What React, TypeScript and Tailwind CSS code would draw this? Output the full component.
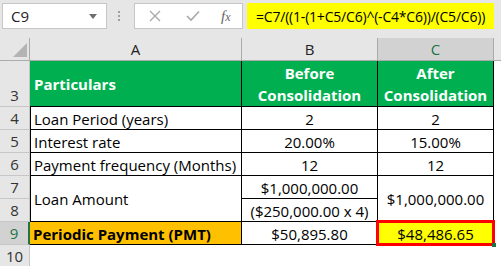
import type { ReactNode } from 'react'

const font = { fontFamily: '"Open Sans", Lato, "Liberation Sans", sans-serif' }

function RowNum({ n, selected }: { n: number; selected?: boolean }) {
  return (
    <div
      className={`flex items-end justify-center border-b border-r pb-[1px] text-[15px] leading-[20px] ${
        selected
          ? 'border-r-[2px] border-b-[#c6c6c6] border-r-[#217346] bg-[#d2d2d2] text-[#217346]'
          : 'border-[#c6c6c6] bg-[#e6e6e6] text-[#333]'
      }`}
    >
      {n}
    </div>
  )
}

function Cell({
  children,
  className = '',
}: {
  children?: ReactNode
  className?: string
}) {
  return (
    <div
      className={`flex whitespace-nowrap border-b border-r border-black text-[15px] leading-[20px] text-black ${className}`}
    >
      {children}
    </div>
  )
}

const label = 'border-l pl-[3px]'

function XIcon() {
  return (
    <svg width="12" height="12" viewBox="0 0 12 12">
      <path d="M1 1 L11 11 M11 1 L1 11" stroke="#a8a8a8" strokeWidth="1.3" fill="none" />
    </svg>
  )
}

function CheckIcon() {
  return (
    <svg width="14" height="12" viewBox="0 0 14 12">
      <path d="M1 6 L5 10 L13 1.5" stroke="#a8a8a8" strokeWidth="1.6" fill="none" />
    </svg>
  )
}

export default function App() {
  return (
    <div className="h-[267px] w-[501px] overflow-hidden bg-white" style={font}>
      {/* formula bar */}
      <div className="flex h-[38px] items-start bg-[#e6e6e6] pt-[3px]">
        <div className="ml-[2px] flex h-[26px] w-[105px] items-center justify-between border border-[#c6c6c6] bg-white pl-[8px] pr-[9px] text-[15px] text-[#222]">
          <span>C9</span>
          <svg width="8" height="5" viewBox="0 0 8 5">
            <path d="M0 0 L8 0 L4 5 Z" fill="#6e6e6e" />
          </svg>
        </div>
        <div className="ml-[10px] mt-[8px] flex w-[4px] flex-col items-center gap-[2px]">
          <span className="h-[2px] w-[2px] bg-[#a0a0a0]" />
          <span className="h-[2px] w-[2px] bg-[#a0a0a0]" />
          <span className="h-[2px] w-[2px] bg-[#a0a0a0]" />
        </div>
        <div className="ml-[13px] flex h-[26px] w-[109px] items-center border border-[#c6c6c6] bg-white">
          <span className="ml-[14px]">
            <XIcon />
          </span>
          <span className="ml-[25px]">
            <CheckIcon />
          </span>
          <span
            className="ml-[21px] text-[15px] italic text-[#666]"
            style={{ fontFamily: '"Liberation Serif", serif' }}
          >
            f<span className="text-[12px]">x</span>
          </span>
        </div>
        <div className="ml-[4px] flex h-[26px] w-[247px] items-center overflow-hidden whitespace-nowrap bg-[#ffff00] pl-[9px] text-[14px] tracking-[-0.2px] text-black">
          =C7/((1-(1+C5/C6)^(-C4*C6))/(C5/C6))
        </div>
      </div>

      {/* sheet */}
      <div className="grid grid-cols-[30px_212px_136px_116px_1fr] grid-rows-[23px_46px_23px_23px_23px_23px_23px_23px_1fr]">
        {/* column headers */}
        <div className="relative border-b border-r border-[#ababab] bg-[#e6e6e6]">
          <svg className="absolute left-[13px] top-[5px]" width="14" height="14" viewBox="0 0 14 14">
            <path d="M14 0 L14 14 L0 14 Z" fill="#b4b4b4" />
          </svg>
        </div>
        <div className="flex items-center justify-center border-b border-r border-[#ababab] bg-[#e6e6e6] text-[15px] text-[#222]">
          A
        </div>
        <div className="flex items-center justify-center border-b border-r border-[#ababab] bg-[#e6e6e6] text-[15px] text-[#222]">
          B
        </div>
        <div className="flex items-center justify-center border-b border-r border-[#ababab] bg-[#d2d2d2] text-[15px] text-[#217346]">
          C
        </div>
        <div className="border-b border-[#ababab] bg-[#e6e6e6]" />

        {/* row 3 */}
        <RowNum n={3} />
        <Cell className="items-center bg-[#00b050] pl-[4px] text-[14.5px] font-bold">
          <span className="text-white">Particulars</span>
        </Cell>
        <Cell className="flex-col items-center justify-center bg-[#00b050] text-[14.5px] font-bold leading-[22px]">
          <span className="text-white">Before</span>
          <span className="text-white">Consolidation</span>
        </Cell>
        <Cell className="flex-col items-center justify-center bg-[#00b050] text-[14.5px] font-bold leading-[22px]">
          <span className="text-white">After</span>
          <span className="text-white">Consolidation</span>
        </Cell>
        <div />

        {/* row 4 */}
        <RowNum n={4} />
        <Cell className={`items-end ${label}`}>Loan Period (years)</Cell>
        <Cell className="items-end justify-center">2</Cell>
        <Cell className="items-end justify-center">2</Cell>
        <div />

        {/* row 5 */}
        <RowNum n={5} />
        <Cell className={`items-end ${label}`}>Interest rate</Cell>
        <Cell className="items-end justify-center">20.00%</Cell>
        <Cell className="items-end justify-center">15.00%</Cell>
        <div />

        {/* row 6 */}
        <RowNum n={6} />
        <Cell className={`items-end ${label}`}>Payment frequency (Months)</Cell>
        <Cell className="items-end justify-center">12</Cell>
        <Cell className="items-end justify-center">12</Cell>
        <div />

        {/* rows 7-8 */}
        <RowNum n={7} />
        <Cell className={`row-span-2 items-center ${label}`}>Loan Amount</Cell>
        <Cell className="items-end justify-center">$1,000,000.00</Cell>
        <Cell className="row-span-2 items-center justify-center">$1,000,000.00</Cell>
        <div className="row-span-2" />
        <RowNum n={8} />
        <Cell className="items-end justify-center">($250,000.00 x 4)</Cell>

        {/* row 9 */}
        <RowNum n={9} selected />
        <Cell className="items-end bg-[#ffc000] pl-[3px] text-[14.5px] font-bold">Periodic Payment (PMT)</Cell>
        <Cell className="items-end justify-center">$50,895.80</Cell>
        <Cell className="relative items-end justify-center bg-[#ffff00]">
          $48,486.65
          <span className="absolute -bottom-[2px] -left-[2px] -right-[2px] -top-[2px] border-[3px] border-[#ff0000]" />
          <span className="absolute -bottom-[3px] -right-[3px] h-[4px] w-[4px] bg-[#217346]" />
        </Cell>
        <div />

        {/* row 10 */}
        <div className="flex items-start justify-center border-r border-[#c6c6c6] bg-[#e6e6e6] pt-[1px] text-[15px] leading-[20px] text-[#333]">
          10
        </div>
        <div />
        <div />
        <div />
        <div />
      </div>
    </div>
  )
}
